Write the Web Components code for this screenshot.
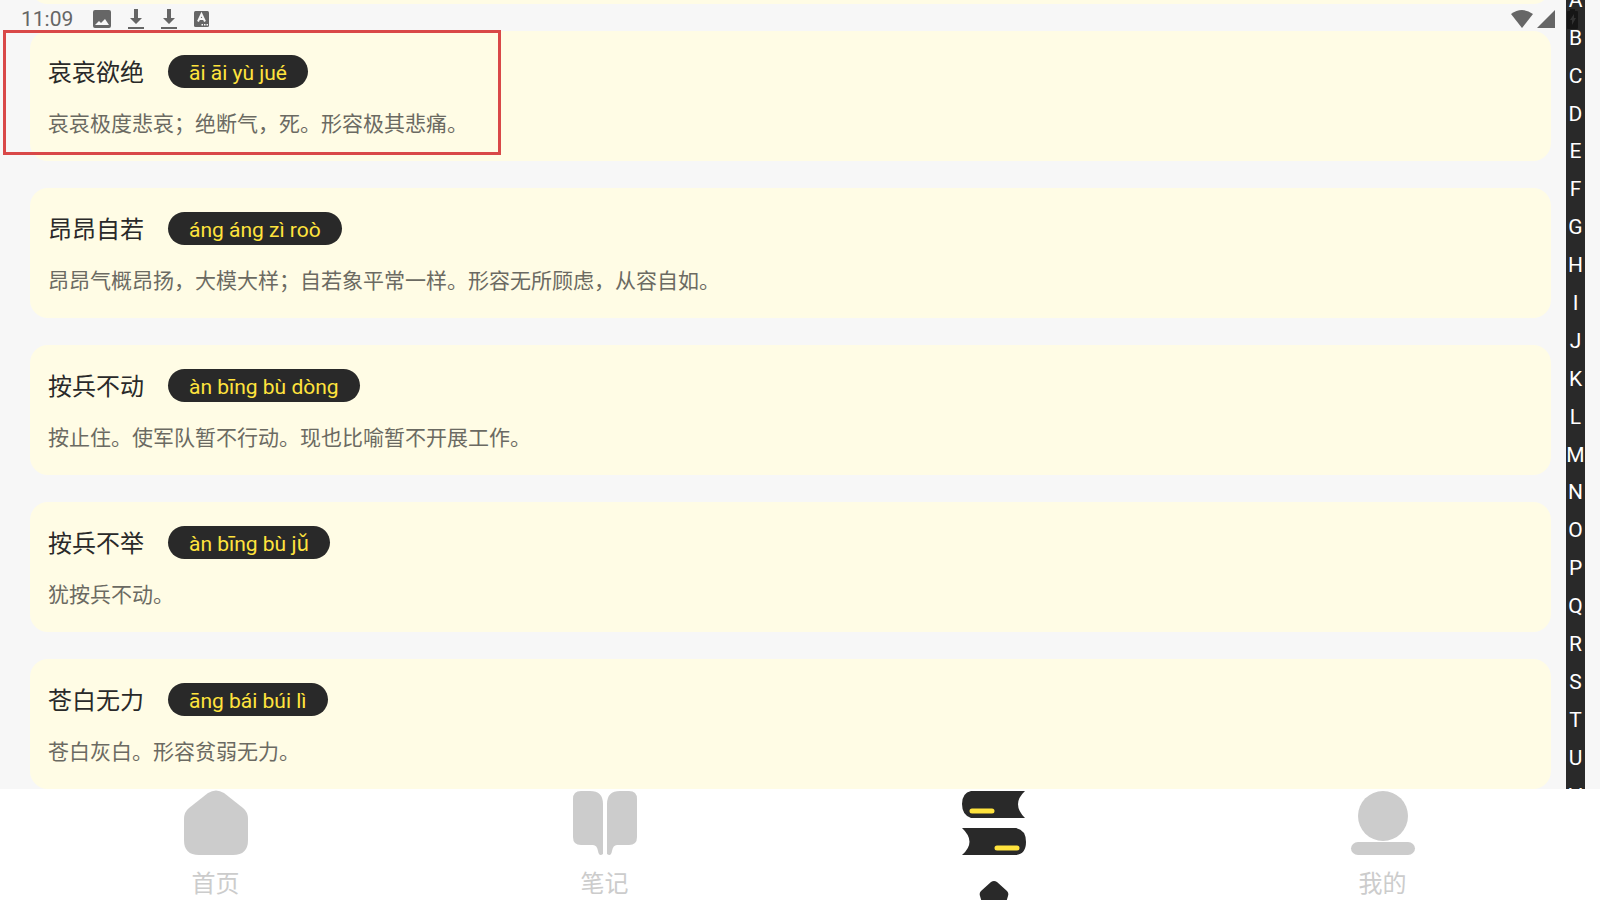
<!DOCTYPE html>
<html lang="zh-CN">
<head>
<meta charset="utf-8">
<meta name="viewport" content="width=device-width, initial-scale=1">
<title>成语</title>
<style>
    html, body {
        height: 100%;
        margin: 0;
    }

    body {
        overflow: hidden;
        background: #f7f7f7;
        font-family: Roboto, "Noto Sans CJK SC", sans-serif;
    }
</style>
</head>
<body>
<idiom-app></idiom-app>

<script>
const idioms = [
    { title: "哀哀欲绝", pinyin: "āi āi yù jué", text: "哀哀极度悲哀；绝断气，死。形容极其悲痛。", marked: true },
    { title: "昂昂自若", pinyin: "áng áng zì roò", text: "昂昂气概昂扬，大模大样；自若象平常一样。形容无所顾虑，从容自如。" },
    { title: "按兵不动", pinyin: "àn bīng bù dòng", text: "按止住。使军队暂不行动。现也比喻暂不开展工作。" },
    { title: "按兵不举", pinyin: "àn bīng bù jǔ", text: "犹按兵不动。" },
    { title: "苍白无力", pinyin: "āng bái búi lì", text: "苍白灰白。形容贫弱无力。" }
];

class StatusBar extends HTMLElement {
    constructor() {
        super();
        this._shadowDOM = this.attachShadow({ mode: "open" });
    }

    connectedCallback() {
        this._shadowDOM.innerHTML = `
            <style>
                :host {
                    display: flex;
                    justify-content: space-between;
                    height: 37px;
                    padding: 0 22px 0 21px;
                    box-sizing: border-box;
                    color: #666;
                    pointer-events: none;
                }

                div {
                    display: flex;
                    align-items: center;
                }

                .left {
                    gap: 17px;
                }

                .right {
                    gap: 4px;
                }

                time {
                    margin-right: 3px;
                    font-size: 21px;
                    line-height: 36px;
                }

                .battery {
                    margin-left: 8px;
                }

                svg {
                    display: block;
                    fill: currentColor;
                }
            </style>
            <div class="left">
                <time>11:09</time>
                <svg width="18" height="18" viewBox="0 0 18 18"><path fill-rule="evenodd" d="M2 0h14a2 2 0 0 1 2 2v14a2 2 0 0 1-2 2H2a2 2 0 0 1-2-2V2a2 2 0 0 1 2-2zM2 15h14l-4-6-4 4-2-2z"/></svg>
                <svg width="16" height="22" viewBox="0 0 16 22"><path d="M6 1h4v9h4l-6 6-6-6h4zM0 19h16v2H0z"/></svg>
                <svg width="16" height="22" viewBox="0 0 16 22"><path d="M6 1h4v9h4l-6 6-6-6h4zM0 19h16v2H0z"/></svg>
                <svg width="16" height="18" viewBox="0 0 32 36"><rect y="2" width="30" height="32" rx="3"/><path d="M8 23 15 8l7 15M11 18h8" fill="none" stroke="#f7f7f7" stroke-width="4"/><path d="M15 28h3v3h-3zM20 28h3v3h-3zM25 28h3v3h-3z" fill="#f7f7f7"/></svg>
            </div>
            <div class="right">
                <svg width="22" height="18" viewBox="0 0 22 18"><path d="M0 4q11-8 22 0L11 18z"/></svg>
                <svg width="18" height="18" viewBox="0 0 18 18"><path d="M18 0v18H0z"/></svg>
                <svg class="battery" width="11" height="20" viewBox="0 0 11 20"><path d="M3 0h5v2h2q1 0 1 1v16q0 1-1 1H1q-1 0-1-1V3q0-1 1-1h2z" fill="#161616"/><path d="M7 5 3 11h2v5l4-7H7z" fill="#333"/></svg>
            </div>
        `;
    }
}

class IdiomCard extends HTMLElement {
    constructor() {
        super();
        this._shadowDOM = this.attachShadow({ mode: "open" });
    }

    connectedCallback() {
        this._shadowDOM.innerHTML = `
            <style>
                :host {
                    display: block;
                    position: relative;
                    min-height: 130px;
                    padding: 24px 18px 20px;
                    box-sizing: border-box;
                    border-radius: 18px;
                    background: #fffce5;
                }

                header {
                    display: flex;
                    align-items: center;
                    gap: 24px;
                }

                h2 {
                    margin: 0;
                    padding-top: 3px;
                    color: #292929;
                    font-size: 24px;
                    line-height: 30px;
                    font-weight: 400;
                }

                .pinyin {
                    padding: 3px 21px 0;
                    border-radius: 17px;
                    background: #292929;
                    color: #ffe33d;
                    font-size: 21px;
                    line-height: 30px;
                }

                .pinyin:empty {
                    display: none;
                }

                p {
                    margin: 20px 0 0;
                    color: #6b6a62;
                    font-size: 21px;
                    line-height: 32px;
                }

                :host([marked])::after {
                    content: "";
                    position: absolute;
                    left: -27px;
                    top: -1px;
                    width: 498px;
                    height: 125px;
                    box-sizing: border-box;
                    border: 3px solid #d94848;
                }
            </style>
            <header>
                <h2><slot name="title"></slot></h2>
                <span class="pinyin">${this.getAttribute("pinyin") || ""}</span>
            </header>
            <p><slot></slot></p>
        `;
    }
}

class LetterIndex extends HTMLElement {
    constructor() {
        super();
        this._shadowDOM = this.attachShadow({ mode: "open" });
    }

    connectedCallback() {
        const letters = [..."ABCDEFGHIJKLMNOPQRSTUVWXYZ"];
        this._shadowDOM.innerHTML = `
            <style>
                :host {
                    display: block;
                    width: 19px;
                    overflow: hidden;
                    background: #292929;
                }

                nav {
                    display: grid;
                    grid-template-rows: repeat(26, 1fr);
                    height: 985px;
                    margin-top: -19px;
                }

                a {
                    display: flex;
                    align-items: center;
                    justify-content: center;
                    color: white;
                    font-size: 21px;
                    line-height: 24px;
                    text-decoration: none;
                }
            </style>
            <nav aria-label="A-Z">${letters.map(l => `<a href="#${l}">${l}</a>`).join("")}</nav>
        `;
    }
}

class TabItem extends HTMLElement {
    constructor() {
        super();
        this._shadowDOM = this.attachShadow({ mode: "open" });
    }

    connectedCallback() {
        this._shadowDOM.innerHTML = `
            <style>
                :host {
                    display: block;
                    flex: 1;
                }

                a {
                    display: flex;
                    flex-direction: column;
                    align-items: center;
                    gap: 10px;
                    padding-top: 1px;
                    color: #ccc;
                    font-size: 24px;
                    line-height: 36px;
                    text-decoration: none;
                }

                ::slotted(svg) {
                    display: block;
                    fill: currentColor;
                }

                :host([active]) a {
                    gap: 25px;
                    color: #292929;
                }
            </style>
            <a href="#"><slot name="icon"></slot><slot></slot></a>
        `;
    }
}

class TabBar extends HTMLElement {
    constructor() {
        super();
        this._shadowDOM = this.attachShadow({ mode: "open" });
    }

    connectedCallback() {
        this._shadowDOM.innerHTML = `
            <style>
                :host {
                    display: block;
                    background: white;
                    overflow: hidden;
                }

                nav {
                    display: flex;
                    height: 111px;
                    padding: 0 23px 0 21px;
                }
            </style>
            <nav>
                <tab-item>
                    <svg slot="icon" width="66" height="66" viewBox="0 0 66 66"><path d="M25 3q8-5 16 0l19 15q5 4 5 11v21q0 15-15 15H16Q1 65 1 50V29q0-7 5-11z"/></svg>
                    首页
                </tab-item>
                <tab-item>
                    <svg slot="icon" width="66" height="66" viewBox="0 0 66 66"><path d="M9 1h9q13 0 13 13v50q-4 3-5-3-1-6-5-6H9q-8 0-8-8V9q0-8 8-8zM57 1h-9Q35 1 35 14v50q4 3 5-3 1-6 5-6h12q8 0 8-8V9q0-8-8-8z"/></svg>
                    笔记
                </tab-item>
                <tab-item active>
                    <svg slot="icon" width="66" height="66" viewBox="0 0 66 66"><path d="M10 1h54q-14 13 0 27H10Q1 25 1 14T10 1zM1 38h54q10 2 10 14t-10 13H1q15-13 0-27z"/><path d="M11 21h20M36 58h20" stroke="#ffe33d" stroke-width="5" stroke-linecap="round"/></svg>
                    <svg width="30" height="28" viewBox="0 0 30 28"><path d="M12 1q3-2 6 0l10 9q2 2 1 5l-3 10q-1 3-4 3H8q-3 0-4-3L1 15q-1-3 1-5z" fill="#292929"/></svg>
                </tab-item>
                <tab-item>
                    <svg slot="icon" width="66" height="66" viewBox="0 0 66 66"><circle cx="33" cy="26" r="25"/><rect x="1" y="52" width="64" height="13" rx="7"/></svg>
                    我的
                </tab-item>
            </nav>
        `;
    }
}

class IdiomApp extends HTMLElement {
    constructor() {
        super();
        this._shadowDOM = this.attachShadow({ mode: "open" });
    }

    connectedCallback() {
        this._shadowDOM.innerHTML = `
            <style>
                :host {
                    display: flex;
                    flex-direction: column;
                    position: relative;
                    height: 100vh;
                }

                main {
                    display: flex;
                    flex: 1;
                    min-height: 0;
                    gap: 15px;
                    padding: 0 15px 0 30px;
                    overflow: hidden;
                }

                /* the list is scrolled past its first card */
                .list {
                    display: flex;
                    flex: 1;
                    flex-direction: column;
                    gap: 27px;
                    margin-top: -126px;
                }

                idiom-card {
                    flex: none;
                }

                status-bar {
                    position: absolute;
                    top: 0;
                    left: 0;
                    right: 0;
                }
            </style>
            <main>
                <div class="list">
                    <idiom-card></idiom-card>
                    ${idioms.map(i => `
                        <idiom-card pinyin="${i.pinyin}" ${i.marked ? "marked" : ""}>
                            <span slot="title">${i.title}</span>
                            ${i.text}
                        </idiom-card>
                    `).join("")}
                </div>
                <letter-index></letter-index>
            </main>
            <tab-bar></tab-bar>
            <status-bar></status-bar>
        `;
    }
}

customElements.define('status-bar', StatusBar);
customElements.define('idiom-card', IdiomCard);
customElements.define('letter-index', LetterIndex);
customElements.define('tab-item', TabItem);
customElements.define('tab-bar', TabBar);
customElements.define('idiom-app', IdiomApp);
</script>
</body>
</html>
